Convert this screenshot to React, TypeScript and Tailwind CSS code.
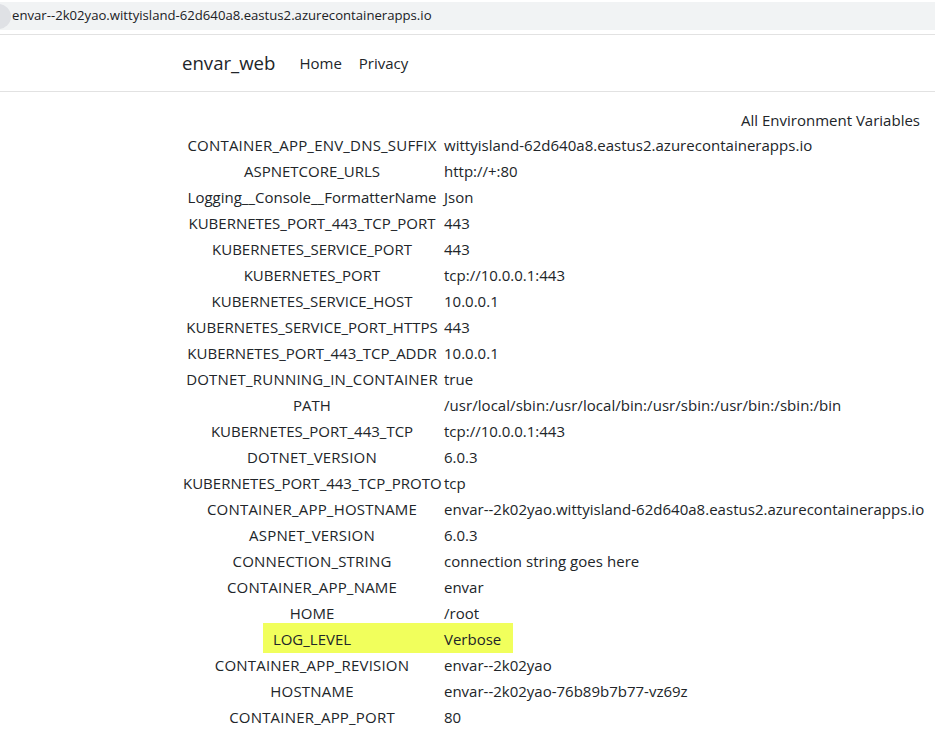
const rows: [string, string, boolean][] = [
  ["CONTAINER_APP_ENV_DNS_SUFFIX", "wittyisland-62d640a8.eastus2.azurecontainerapps.io", true],
  ["ASPNETCORE_URLS", "http://+:80", false],
  ["Logging__Console__FormatterName", "Json", false],
  ["KUBERNETES_PORT_443_TCP_PORT", "443", false],
  ["KUBERNETES_SERVICE_PORT", "443", false],
  ["KUBERNETES_PORT", "tcp://10.0.0.1:443", false],
  ["KUBERNETES_SERVICE_HOST", "10.0.0.1", false],
  ["KUBERNETES_SERVICE_PORT_HTTPS", "443", false],
  ["KUBERNETES_PORT_443_TCP_ADDR", "10.0.0.1", false],
  ["DOTNET_RUNNING_IN_CONTAINER", "true", true],
  ["PATH", "/usr/local/sbin:/usr/local/bin:/usr/sbin:/usr/bin:/sbin:/bin", false],
  ["KUBERNETES_PORT_443_TCP", "tcp://10.0.0.1:443", false],
  ["DOTNET_VERSION", "6.0.3", true],
  ["KUBERNETES_PORT_443_TCP_PROTO", "tcp", false],
  ["CONTAINER_APP_HOSTNAME", "envar--2k02yao.wittyisland-62d640a8.eastus2.azurecontainerapps.io", true],
  ["ASPNET_VERSION", "6.0.3", true],
  ["CONNECTION_STRING", "connection string goes here", true],
  ["CONTAINER_APP_NAME", "envar", true],
  ["HOME", "/root", false],
  ["LOG_LEVEL", "Verbose", false],
  ["CONTAINER_APP_REVISION", "envar--2k02yao", true],
  ["HOSTNAME", "envar--2k02yao-76b89b7b77-vz69z", true],
  ["CONTAINER_APP_PORT", "80", true],
];

export default function App() {
  return (
    <div className="h-[739px] w-[935px] overflow-hidden bg-white font-['Open_Sans','Noto_Sans',sans-serif] text-[15px] text-[#212529]">
      <div className="pt-[2px]">
        <div className="relative flex h-[28px] items-center overflow-hidden bg-[#f1f3f4] pl-[12px] text-[13.15px] text-[#202124]">
          <div className="absolute left-[-14px] top-[2px] h-[25px] w-[25px] rounded-full bg-[#dfe1e5]" />
          <span className="relative">envar--2k02yao.wittyisland-62d640a8.eastus2.azurecontainerapps.io</span>
        </div>
      </div>
      <div className="mt-[4px] flex h-[58px] items-center border-y border-[#e2e2e2] pl-[182px]">
        <span className="text-[18.6px]">envar_web</span>
        <span className="ml-[24px]">Home</span>
        <span className="ml-[17px]">Privacy</span>
      </div>
      <div className="mt-[15px] pr-[15px] text-right leading-[26px]">All Environment Variables</div>
      <div className="mt-[-1px] pl-[183px] leading-[26px]">
        {rows.map(([k, v, wide]) => (
          <div key={k} className="relative flex h-[26px] items-center">
            {k === "LOG_LEVEL" && (
              <div className="absolute left-[80px] top-[-3px] h-[30px] w-[250px] bg-[#f1ff5c]" />
            )}
            <div className={"relative w-[261px] whitespace-nowrap pr-[3px] text-center " + (wide ? "tracking-[0.2px]" : "")}>{k}</div>
            <div className={"relative whitespace-nowrap " + (v.includes("azure") ? "tracking-[0.02px]" : v.startsWith("/usr") || v.startsWith("connection") ? "tracking-[0.05px]" : "")}>{v}</div>
          </div>
        ))}
      </div>
    </div>
  );
}
